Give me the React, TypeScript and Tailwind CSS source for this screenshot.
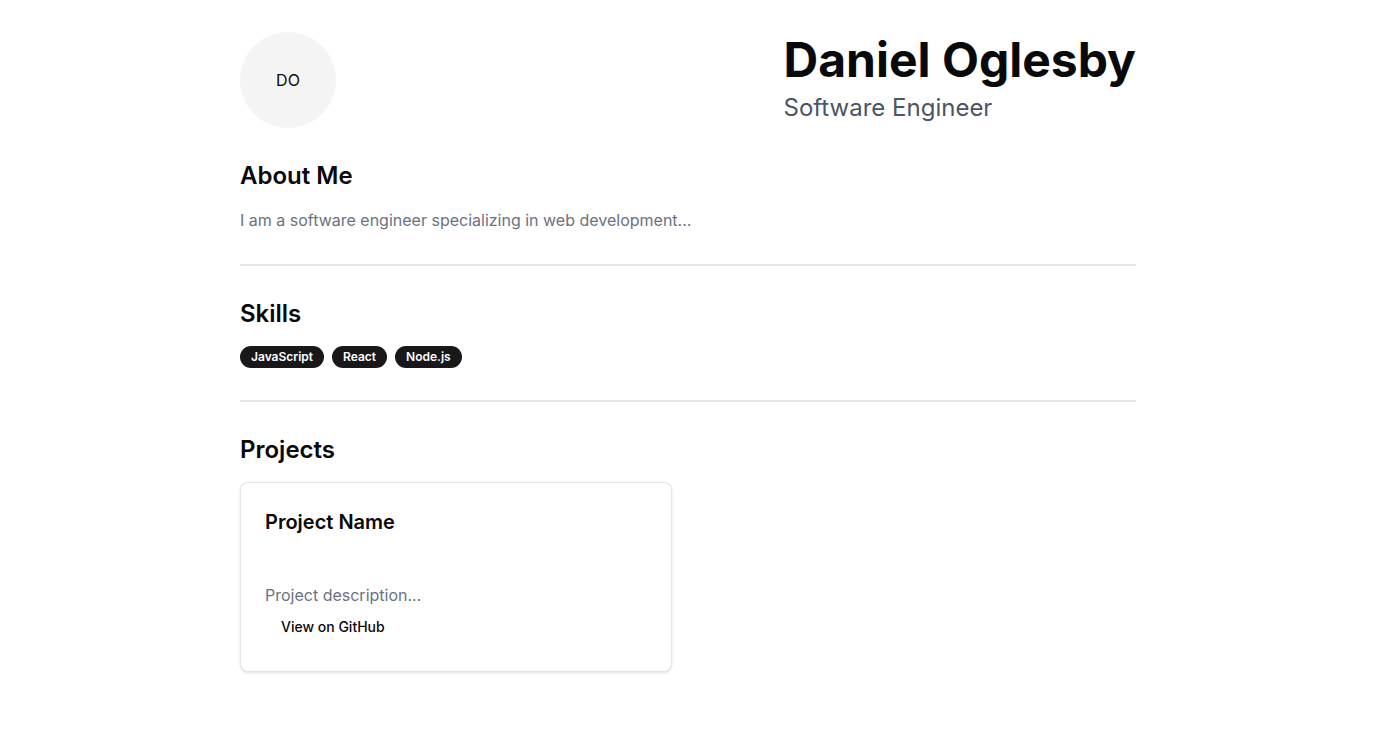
import React from 'react';

const skills = ['JavaScript', 'React', 'Node.js'];

const App: React.FC = () => {
  return (
    <div className="min-h-screen bg-white text-[#09090b]" style={{ fontFamily: 'Inter, "Noto Sans", sans-serif' }}>
      <div className="max-w-4xl mx-auto py-8">
        <header className="flex justify-between items-center mb-8">
          <div className="w-24 h-24 rounded-full bg-[#f4f4f5] flex items-center justify-center text-base">
            DO
          </div>
          <div>
            <h1 className="text-5xl font-bold">Daniel Oglesby</h1>
            <p className="text-2xl text-gray-600 mt-2">Software Engineer</p>
          </div>
        </header>

        <section>
          <h2 className="text-2xl font-semibold mb-4">About Me</h2>
          <p className="text-gray-500">I am a software engineer specializing in web development...</p>
        </section>

        <hr className="my-8 border-t-2 border-gray-200" />

        <section>
          <h2 className="text-2xl font-semibold mb-4">Skills</h2>
          <div className="flex gap-2">
            {skills.map((skill) => (
              <span
                key={skill}
                className="inline-flex items-center rounded-full border border-transparent bg-[#18181b] px-2.5 py-0.5 text-xs font-semibold text-white"
              >
                {skill}
              </span>
            ))}
          </div>
        </section>

        <hr className="my-8 border-t-2 border-gray-200" />

        <section>
          <h2 className="text-2xl font-semibold mb-4">Projects</h2>
          <div className="grid grid-cols-2 gap-8">
            <div className="rounded-lg border border-[#e4e4e7] bg-white shadow-sm">
              <div className="px-6 pt-[25px] pb-[47px]">
                <h3 className="text-xl font-semibold">Project Name</h3>
              </div>
              <div className="px-6 pb-6">
                <p className="text-gray-500">Project description...</p>
                <button className="h-10 px-4 text-sm font-medium">View on GitHub</button>
              </div>
            </div>
          </div>
        </section>
      </div>
    </div>
  );
};

export default App;
